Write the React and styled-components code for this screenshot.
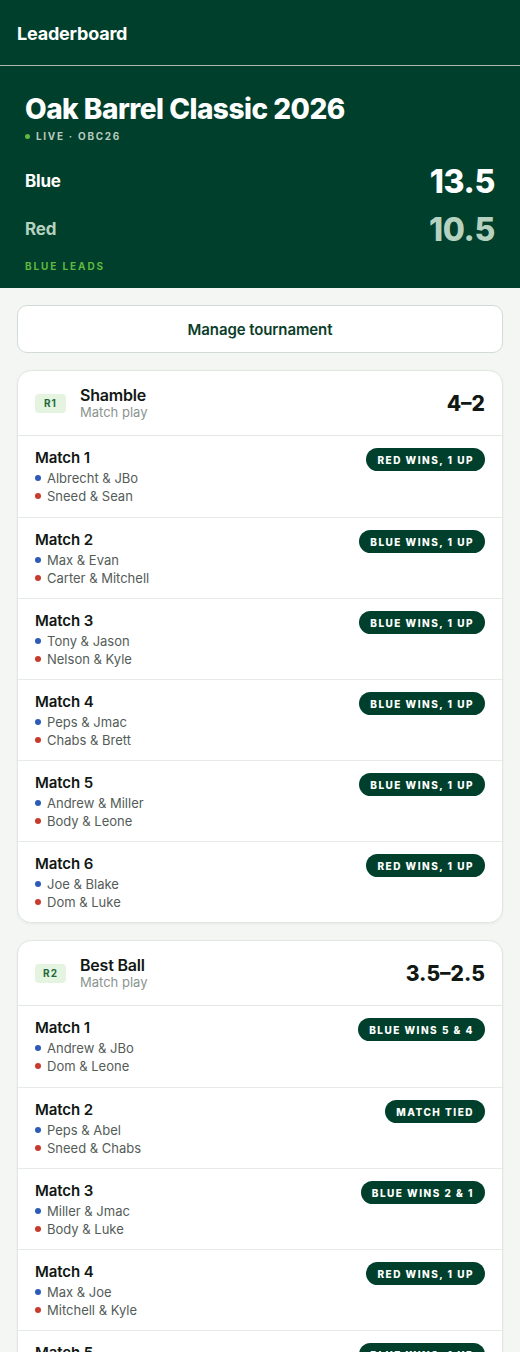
import React from 'react';
import styled, { createGlobalStyle } from 'styled-components';

const GlobalStyle = createGlobalStyle`
  body {
    margin: 0;
    background: #f3f6f3;
    font-family: Inter, "Noto Sans", sans-serif;
    color: #111814;
  }
`;

const Page = styled.div`
  width: 520px;
`;

const TopBar = styled.header`
  background: #003f2b;
  height: 65px;
  display: flex;
  align-items: center;
  padding: 0 17px;
  border-bottom: 1px solid #a9b8ae;
  box-sizing: content-box;
`;

const TopTitle = styled.h1`
  margin: 0;
  color: #fff;
  font-size: 18px;
  font-weight: 700;
  letter-spacing: -0.2px;
  padding-top: 2px;
`;

const Hero = styled.section`
  background: #003f2b;
  padding: 26px 25px 16px 25px;
  display: flex;
  flex-direction: column;
`;

const EventTitle = styled.h2`
  margin: 0;
  color: #fff;
  font-size: 28px;
  font-weight: 800;
  letter-spacing: -0.5px;
  line-height: 34px;
`;

const LiveLine = styled.div`
  display: flex;
  align-items: center;
  gap: 6px;
  margin-top: 4px;
  color: #b8cbbe;
  font-size: 10px;
  font-weight: 700;
  letter-spacing: 1.7px;
  line-height: 12px;
`;

const Dot = styled.span`
  width: ${p => p.$size || 6}px;
  height: ${p => p.$size || 6}px;
  border-radius: 50%;
  background: ${p => p.$color};
  flex-shrink: 0;
`;

const TeamRow = styled.div`
  display: flex;
  justify-content: space-between;
  align-items: center;
  margin-top: ${p => p.$first ? '18px' : '6px'};
  height: 42px;
  color: ${p => p.$muted ? '#b5d2c0' : '#fff'};
`;

const TeamName = styled.span`
  font-size: 17px;
  font-weight: 700;
  letter-spacing: -0.2px;
`;

const TeamScore = styled.span`
  font-size: 32px;
  font-weight: 800;
  letter-spacing: -0.3px;
`;

const LeadNote = styled.div`
  margin-top: 10px;
  color: #5fb83f;
  font-size: 10px;
  font-weight: 700;
  letter-spacing: 1.9px;
`;

const Body = styled.main`
  padding: 17px 17px 40px;
  display: flex;
  flex-direction: column;
  gap: 17px;
`;

const ManageButton = styled.button`
  height: 48px;
  background: #fff;
  border: 1px solid #d3dbd6;
  border-radius: 10px;
  color: #0b3d2a;
  font-family: inherit;
  font-size: 15px;
  font-weight: 600;
  letter-spacing: -0.1px;
  cursor: pointer;
`;

const Card = styled.section`
  background: #fff;
  border: 1px solid #e0e6e2;
  border-radius: 14px;
  overflow: hidden;
  box-shadow: 0 1px 3px rgba(0, 30, 15, 0.05);
`;

const CardHeader = styled.div`
  height: 64px;
  display: flex;
  align-items: center;
  padding: 0 17px;
  gap: 14px;
  border-bottom: 1px solid #e3e8e5;
`;

const RoundBadge = styled.span`
  width: 31px;
  height: 19px;
  border-radius: 4px;
  background: #e5f3e1;
  color: #1f6a3c;
  font-size: 10px;
  font-weight: 700;
  letter-spacing: 1px;
  display: flex;
  align-items: center;
  justify-content: center;
`;

const HeaderText = styled.div`
  display: flex;
  flex-direction: column;
  flex: 1;
`;

const RoundName = styled.span`
  font-size: 16px;
  font-weight: 600;
  line-height: 18px;
  letter-spacing: -0.2px;
`;

const RoundFormat = styled.span`
  font-size: 13px;
  color: #8a948f;
  line-height: 16px;
`;

const RoundScore = styled.span`
  font-size: 21px;
  font-weight: 800;
  letter-spacing: 0;
`;

const MatchRow = styled.div`
  height: 81px;
  box-sizing: border-box;
  padding: 12px 17px 0;
  display: flex;
  justify-content: space-between;
  align-items: flex-start;
  border-top: ${p => p.$first ? 'none' : '1px solid #e6ebe8'};
`;

const MatchInfo = styled.div`
  display: flex;
  flex-direction: column;
`;

const MatchTitle = styled.span`
  font-size: 15px;
  font-weight: 600;
  line-height: 20px;
  letter-spacing: -0.1px;
  margin-bottom: 1px;
`;

const Pair = styled.span`
  display: flex;
  align-items: center;
  gap: 6px;
  font-size: 13px;
  color: #545c58;
  line-height: 18px;
`;

const ResultPill = styled.span`
  height: 23px;
  padding: 0 11px;
  border-radius: 12px;
  background: #003f2b;
  color: #fff;
  font-size: 10px;
  font-weight: 800;
  letter-spacing: 1.5px;
  display: flex;
  align-items: center;
  white-space: nowrap;
`;

const BLUE = '#2c5bb8';
const RED = '#c83a2c';

const rounds = [
  {
    code: 'R1',
    name: 'Shamble',
    score: '4–2',
    matches: [
      ['Albrecht & JBo', 'Sneed & Sean', 'RED WINS, 1 UP'],
      ['Max & Evan', 'Carter & Mitchell', 'BLUE WINS, 1 UP'],
      ['Tony & Jason', 'Nelson & Kyle', 'BLUE WINS, 1 UP'],
      ['Peps & Jmac', 'Chabs & Brett', 'BLUE WINS, 1 UP'],
      ['Andrew & Miller', 'Body & Leone', 'BLUE WINS, 1 UP'],
      ['Joe & Blake', 'Dom & Luke', 'RED WINS, 1 UP']
    ]
  },
  {
    code: 'R2',
    name: 'Best Ball',
    score: '3.5–2.5',
    matches: [
      ['Andrew & JBo', 'Dom & Leone', 'BLUE WINS 5 & 4'],
      ['Peps & Abel', 'Sneed & Chabs', 'MATCH TIED'],
      ['Miller & Jmac', 'Body & Luke', 'BLUE WINS 2 & 1'],
      ['Max & Joe', 'Mitchell & Kyle', 'RED WINS, 1 UP'],
      ['Tony & Evan', 'Carter & Brett', 'BLUE WINS, 1 UP'],
      ['Jason & Blake', 'Nelson & Sean', 'RED WINS, 1 UP']
    ]
  }
];

const App = () => (
  <Page>
    <GlobalStyle />
    <TopBar>
      <TopTitle>Leaderboard</TopTitle>
    </TopBar>
    <Hero>
      <EventTitle>Oak Barrel Classic 2026</EventTitle>
      <LiveLine>
        <Dot $color="#5fb83f" $size={5} />
        LIVE · OBC26
      </LiveLine>
      <TeamRow $first>
        <TeamName>Blue</TeamName>
        <TeamScore>13.5</TeamScore>
      </TeamRow>
      <TeamRow $muted>
        <TeamName>Red</TeamName>
        <TeamScore>10.5</TeamScore>
      </TeamRow>
      <LeadNote>BLUE LEADS</LeadNote>
    </Hero>
    <Body>
      <ManageButton>Manage tournament</ManageButton>
      {rounds.map(round => (
        <Card key={round.code}>
          <CardHeader>
            <RoundBadge>{round.code}</RoundBadge>
            <HeaderText>
              <RoundName>{round.name}</RoundName>
              <RoundFormat>Match play</RoundFormat>
            </HeaderText>
            <RoundScore>{round.score}</RoundScore>
          </CardHeader>
          {round.matches.map((m, i) => (
            <MatchRow key={i} $first={i === 0}>
              <MatchInfo>
                <MatchTitle>Match {i + 1}</MatchTitle>
                <Pair>
                  <Dot $color={BLUE} />
                  {m[0]}
                </Pair>
                <Pair>
                  <Dot $color={RED} />
                  {m[1]}
                </Pair>
              </MatchInfo>
              <ResultPill>{m[2]}</ResultPill>
            </MatchRow>
          ))}
        </Card>
      ))}
    </Body>
  </Page>
);

export default App;
